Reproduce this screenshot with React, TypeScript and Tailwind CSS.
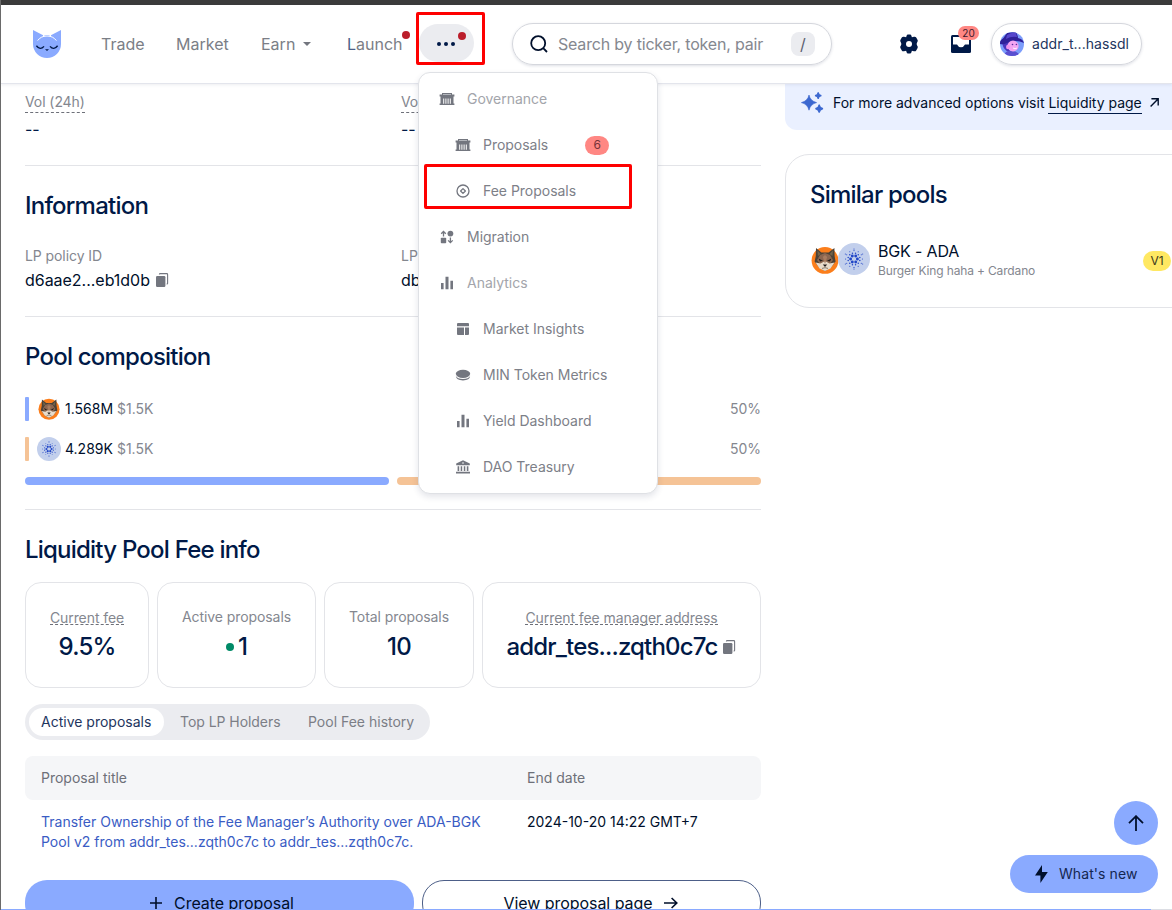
import type { ReactNode } from "react";

function CatLogo() {
  return (
    <svg width="28" height="28" viewBox="0 0 28 28" className="shrink-0">
      <path d="M0 0 L10.6 5.4 Q14 4.4 17.4 5.4 L28 0 V14 A14 14 0 0 1 0 14 Z" fill="#8aaaff" />
      <path d="M4.6 10.6 Q8 6 14 6 T23.4 10.6" fill="none" stroke="#fff" strokeWidth="1" />
      <path d="M10 5.2 L11.8 6.2 M18 5.2 L16.2 6.2" stroke="#fff" strokeWidth="1" />
      <path d="M3.4 15.8 Q7.2 20.6 11 16.4 M17 16.4 Q20.8 20.6 24.6 15.8" fill="none" stroke="#001947" strokeWidth="1.4" />
      <path d="M12 19.2 H16 L14 21 Z" fill="#001947" />
    </svg>
  );
}

function HallIcon() {
  return (
    <svg width="16" height="16" viewBox="0 0 16 16" fill="#73767f">
      <path d="M3 2 H13 V3.4 H15.4 V5.4 H14.5 V12.6 H15.4 V14 H0.6 V12.6 H1.5 V5.4 H0.6 V3.4 H3 Z" />
      <path d="M4.2 7.4 H5.2 V12.8 H4.2 Z M6.4 7.4 H7.4 V12.8 H6.4 Z M8.6 7.4 H9.6 V12.8 H8.6 Z M10.8 7.4 H11.8 V12.8 H10.8 Z" fill="#fff" />
      <path d="M4 3.5 H12" stroke="#c3c5ca" strokeWidth="0.8" />
    </svg>
  );
}

function FeeIcon() {
  return (
    <svg width="16" height="16" viewBox="0 0 16 16" fill="none" stroke="#73767f" strokeWidth="1.3">
      <circle cx="8" cy="8" r="6" />
      <path d="M8 5.6 L10.4 8 L8 10.4 L5.6 8 Z" strokeLinejoin="round" />
    </svg>
  );
}

function MigrationIcon() {
  return (
    <svg width="16" height="16" viewBox="0 0 16 16" fill="#73767f">
      <circle cx="11.4" cy="4.6" r="2.9" />
      <rect x="1.8" y="8.8" width="5.4" height="5.4" rx="0.8" />
      <path d="M4.5 7.6 V2.8 M2.2 4.8 L4.5 2.5 L6.8 4.8 M11.4 8.6 V13.4 M9.1 11.4 L11.4 13.7 L13.7 11.4" fill="none" stroke="#73767f" strokeWidth="1.3" />
    </svg>
  );
}

function BarsIcon() {
  return (
    <svg width="16" height="16" viewBox="0 0 16 16" fill="#73767f">
      <path d="M2 8 H4.6 V14.3 H2 Z M6.5 1.8 H9.5 V14.3 H6.5 Z M11.4 5.8 H14 V14.3 H11.4 Z" />
    </svg>
  );
}

function PanelsIcon() {
  return (
    <svg width="16" height="16" viewBox="0 0 16 16" fill="#73767f">
      <path d="M3 2 H13 Q14 2 14 3 V5.2 H2 V3 Q2 2 3 2 Z M2 6.4 H9 V14 H3 Q2 14 2 13 Z M10 6.4 H14 V13 Q14 14 13 14 H10 Z" />
    </svg>
  );
}

function CoinIcon() {
  return (
    <svg width="16" height="16" viewBox="0 0 16 16" fill="#73767f">
      <ellipse cx="8" cy="6.8" rx="7.2" ry="4.1" />
      <path d="M0.8 8.8 Q1.2 13.4 8 13.4 T15.2 8.8 Q13.6 12 8 12 T0.8 8.8 Z" />
    </svg>
  );
}

function BankIcon() {
  return (
    <svg width="16" height="16" viewBox="0 0 16 16" fill="#73767f">
      <path d="M8 1.2 L14.8 4.6 V6.2 H1.2 V4.6 Z M2.6 7.2 H4.2 V12 H2.6 Z M5.7 7.2 H7.2 V12 H5.7 Z M8.8 7.2 H10.3 V12 H8.8 Z M11.8 7.2 H13.4 V12 H11.8 Z M1 12.8 H15 V14.6 H1 Z" />
      <circle cx="8" cy="4" r="0.8" fill="#fff" />
    </svg>
  );
}

function CopyIcon() {
  return (
    <svg width="13" height="14" viewBox="0 0 13 14" className="shrink-0">
      <rect x="0" y="3" width="9.4" height="11" rx="1.2" fill="#73767f" />
      <path d="M3.4 1.6 V1.4 Q3.4 0.6 4.2 0.6 H10.8 Q11.6 0.6 11.6 1.4 V10.4 Q11.6 11 11 11 H10.6" fill="none" stroke="#73767f" strokeWidth="1.1" />
    </svg>
  );
}

function GearIcon() {
  return (
    <svg width="20" height="20" viewBox="0 0 20 20" className="shrink-0">
      <path
        d="M7.6 1.8 Q7.9 0.4 9 0.4 H11 Q12.1 0.4 12.4 1.8 L12.9 3.2 L15 2.8 Q16.6 2.5 17.2 3.6 L18.6 6 Q19.2 7.1 18.2 8.2 L17.6 10 L18.2 11.8 Q19.2 12.9 18.6 14 L17.2 16.4 Q16.6 17.5 15 17.2 L12.9 16.8 L12.4 18.2 Q12.1 19.6 11 19.6 H9 Q7.9 19.6 7.6 18.2 L7.1 16.8 L5 17.2 Q3.4 17.5 2.8 16.4 L1.4 14 Q0.8 12.9 1.8 11.8 L2.4 10 L1.8 8.2 Q0.8 7.1 1.4 6 L2.8 3.6 Q3.4 2.5 5 2.8 L7.1 3.2 Z"
        fill="#001947"
      />
      <circle cx="10" cy="10" r="3" fill="#fff" />
    </svg>
  );
}

function InboxIcon() {
  return (
    <svg width="20" height="18" viewBox="0 0 20 18">
      <path d="M1.5 0 H18.5 Q20 0 20 1.5 V16.5 Q20 18 18.5 18 H1.5 Q0 18 0 16.5 V1.5 Q0 0 1.5 0 Z" fill="#001947" />
      <path d="M2 2 H18 V9.5 H14 Q12.6 12.3 10 12.3 T6 9.5 H2 Z" fill="#fff" />
    </svg>
  );
}

function Avatar() {
  return (
    <svg width="24" height="24" viewBox="0 0 24 24" className="shrink-0">
      <defs>
        <clipPath id="avatar-clip">
          <circle cx="12" cy="12" r="12" />
        </clipPath>
      </defs>
      <g clipPath="url(#avatar-clip)">
        <rect width="24" height="24" fill="#7c9dfb" />
        <path d="M2 11 Q4 19 9 20 L12 14 L8 8 Z" fill="#4a35bd" />
        <path d="M3 24 Q6 18 12 19 Q18 19 20 24 Z" fill="#5a4fd0" />
        <path d="M0 9 Q4 6 7 1 L16 0 Q18 4 18 6 Q23 7 24 11 Q14 7 7 11 Q3 13 0 12 Z" fill="#2f209a" />
        <path d="M7 3 Q12 0 16 1 L17 5 Q11 4 6 7 Z" fill="#5546cc" />
        <ellipse cx="13" cy="14" rx="5.6" ry="5.4" fill="#f3a4f2" />
        <ellipse cx="8" cy="15" rx="2" ry="2.2" fill="#ee93ee" />
        <circle cx="12.5" cy="12.5" r="0.8" fill="#5a2c9c" />
        <circle cx="16.4" cy="12.5" r="0.8" fill="#5a2c9c" />
        <path d="M13 16 Q15 17.6 17 16" stroke="#fff" strokeWidth="0.9" fill="none" />
      </g>
    </svg>
  );
}

function FoxIcon({ size }: { size: number }) {
  return (
    <svg width={size} height={size} viewBox="0 0 28 28" className="shrink-0">
      <circle cx="14" cy="14.4" r="13.4" fill="#fb7e1c" />
      <path d="M5 2 L10.4 6.4 L17.6 6.4 L23.4 2 L23.6 10 L24.6 15.6 L19.6 22 L14 25 L8.4 22 L3.6 15.6 L4.8 10 Z" fill="#4b4238" />
      <path d="M6.4 4.6 L9.8 8 L7 10 Z M22 4.6 L18.6 8 L21.4 10 Z" fill="#72634a" />
      <path d="M9 9 L14 7 L19 9 L22 14 L19 18 H9 L6 14 Z" fill="#8b6650" />
      <path d="M4.6 16.6 L9.5 17.4 L14 15 L18.5 17.4 L23.6 16.6 L19.5 22.4 L14 25 L8.5 22.4 Z" fill="#e9dccb" />
      <path d="M11.8 11 L14 18 L16.2 11 L14 9 Z" fill="#a87c60" />
      <path d="M7.6 12.6 L12 14.8 L9 15.4 Z M20.4 12.6 L16 14.8 L19 15.4 Z" fill="#231d1b" />
      <path d="M11.8 18.4 H16.2 L14 21 Z" fill="#201a1a" />
      <path d="M11 22.4 Q14 21 17 22.4" stroke="#6b5f54" strokeWidth="0.8" fill="none" />
    </svg>
  );
}

const adaRings = [
  { count: 6, radius: 3.4, dot: 1.45, turn: 0 },
  { count: 12, radius: 6, dot: 0.75, turn: 15 },
  { count: 12, radius: 8.4, dot: 0.55, turn: 0 },
  { count: 6, radius: 10, dot: 0.55, turn: 30 },
];

function AdaIcon({ size }: { size: number }) {
  return (
    <svg width={size} height={size} viewBox="0 0 32 32" className="shrink-0">
      <circle cx="16" cy="16" r="16" fill="#c2cfec" />
      {adaRings.flatMap((ring) =>
        Array.from({ length: ring.count }, (_, i) => {
          const angle = ((i * 360) / ring.count + ring.turn) * (Math.PI / 180);
          return (
            <circle
              key={`${ring.radius}-${i}`}
              cx={16 + ring.radius * Math.cos(angle)}
              cy={16 + ring.radius * Math.sin(angle)}
              r={ring.dot}
              fill="#2146c7"
            />
          );
        }),
      )}
    </svg>
  );
}

type MenuEntry = { label: string; icon: ReactNode; nested?: boolean; group?: boolean; badge?: string; marked?: boolean };

const menu: MenuEntry[] = [
  { label: "Governance", icon: <HallIcon />, group: true },
  { label: "Proposals", icon: <HallIcon />, nested: true, badge: "6" },
  { label: "Fee Proposals", icon: <FeeIcon />, nested: true, marked: true },
  { label: "Migration", icon: <MigrationIcon /> },
  { label: "Analytics", icon: <BarsIcon />, group: true },
  { label: "Market Insights", icon: <PanelsIcon />, nested: true },
  { label: "MIN Token Metrics", icon: <CoinIcon />, nested: true },
  { label: "Yield Dashboard", icon: <BarsIcon />, nested: true },
  { label: "DAO Treasury", icon: <BankIcon />, nested: true },
];

function MoreMenu() {
  return (
    <div className="absolute left-[417px] top-[72px] z-20 h-[422px] w-[240px] rounded-xl border border-[#dfe1e5] bg-white py-[3px] shadow-[0_3px_6px_rgba(30,40,80,0.12)]">
      {menu.map((m) => (
        <div key={m.label} className={`relative flex h-[46px] items-center ${m.nested ? "pl-9" : "pl-5"}`}>
          {m.icon}
          <span className={`ml-3 text-sm tracking-[-0.02px] ${m.group ? "text-[#a3a5ab]" : "text-[#7d8088]"}`}>{m.label}</span>
          {m.badge && (
            <span className="ml-[37px] flex h-[19px] w-6 items-center justify-center rounded-full bg-[#ff8783] text-xs text-[#74343a]">
              {m.badge}
            </span>
          )}
          {m.marked && <div className="absolute left-[5px] top-[-4px] h-[45px] w-[208px] rounded-[2px] border-3 border-[#fe0000]" />}
        </div>
      ))}
    </div>
  );
}

function Header() {
  return (
    <header className="relative z-10 flex h-[79px] shrink-0 items-center border-b border-[#e3e5ec] bg-white pl-8 text-base text-[#7b7e86] shadow-[0_1px_3px_rgba(30,40,80,0.08)]">
      <CatLogo />
      <nav className="flex items-center">
        <a className="ml-10 w-[75px]">Trade</a>
        <a className="w-[85px]">Market</a>
        <a className="flex w-[86px] items-center">
          Earn
          <svg width="8" height="4" viewBox="0 0 8 4" className="ml-2">
            <path d="M0 0 H8 L4 4 Z" fill="#73767f" />
          </svg>
        </a>
        <a className="relative w-[72px]">
          <span className="text-[#4d5f88]">L</span>aunch
          <span className="absolute left-[55px] top-[-1px] size-2 rounded-full bg-[#bb1e2b]" />
        </a>
      </nav>
      <button className="relative mb-0.5 flex h-[38px] w-[55px] items-center justify-center gap-[3px] rounded-full bg-[#ebecf0] pr-0.5 pt-0.5">
        <span className="size-1 rounded-full bg-[#001947]" />
        <span className="size-1 rounded-full bg-[#001947]" />
        <span className="size-1 rounded-full bg-[#001947]" />
        <span className="absolute left-[39px] top-2 size-2 rounded-full bg-[#bb1e2b]" />
        <span className="absolute left-[-3px] top-[-12px] h-[53px] w-[69px] rounded-[2px] border-3 border-[#fe0000]" />
      </button>
      <div className="ml-[38px] flex h-[42px] w-[320px] items-center rounded-full border border-[#d5d7dd] pl-[17px] pr-4 shadow-[0_1px_3px_rgba(30,40,80,0.15)]">
        <svg width="18" height="18" viewBox="0 0 18 18" fill="none" stroke="#000f2b" strokeWidth="1.8" className="shrink-0">
          <circle cx="8.2" cy="8.2" r="7" />
          <path d="M13.2 13.2 L17 17" />
        </svg>
        <span className="ml-[10px] whitespace-nowrap tracking-[-0.19px] text-[#85888f]">Search by ticker, token, pair</span>
        <span className="ml-auto flex size-6 items-center justify-center rounded-lg bg-[#ebecf0] text-base text-[#5c6070]">/</span>
      </div>
      <div className="ml-[67px]">
        <GearIcon />
      </div>
      <div className="relative ml-8">
        <InboxIcon />
        <span className="absolute left-[7px] top-[-9px] flex h-[14px] w-[21px] items-center justify-center rounded-full bg-[#ff8783] text-[10px] text-[#3c1a2c]">
          20
        </span>
      </div>
      <div className="ml-[20px] flex h-[42px] w-[151px] items-center rounded-full border border-[#d5d7dd] pl-2 text-sm tracking-[0.05px] text-[#23355e] shadow-[0_1px_3px_rgba(30,40,80,0.15)]">
        <Avatar />
        <span className="ml-2">addr_t...hassdl</span>
      </div>
    </header>
  );
}

function SectionTitle({ children }: { children: ReactNode }) {
  return <h2 className="text-2xl font-medium leading-8 tracking-[-0.78px] text-[#001947]">{children}</h2>;
}

function StatCard({ className, label, dashed, children }: { className: string; label: string; dashed?: boolean; children: ReactNode }) {
  return (
    <div className={`flex h-[106px] flex-col items-center rounded-2xl border border-[#e3e4e8] pt-6 ${className}`}>
      <div className="flex h-5 items-center whitespace-nowrap text-sm tracking-[-0.08px] text-[#84878f]">
        {dashed ? <span className="mb-px h-4 border-b border-dashed border-[#6d7079] leading-[17px]">{label}</span> : label}
      </div>
      <div className="mt-1 flex h-8 items-center whitespace-nowrap text-2xl font-medium tracking-[-0.83px] text-[#001947]">{children}</div>
    </div>
  );
}

function VolStat() {
  return (
    <div>
      <div className="h-[27px] text-sm leading-5 tracking-[-0.08px] text-[#84878f]">
        <span className="inline-block border-b border-dashed border-[#6d7079]">Vol (24h)</span>
      </div>
      <div className="text-base leading-5 text-[#001947]">--</div>
    </div>
  );
}

function PoolDetails() {
  return (
    <main className="flex w-[736px] flex-col">
      <section className="grid h-[82px] shrink-0 grid-cols-2 gap-4 border-b border-[#e3e4e8] pt-2">
        <VolStat />
        <VolStat />
      </section>

      <section className="h-[151px] shrink-0 border-b border-[#e3e4e8] pt-6">
        <SectionTitle>Information</SectionTitle>
        <div className="mt-6 grid grid-cols-2 gap-4">
          <div>
            <div className="h-5 text-sm leading-5 tracking-[-0.08px] text-[#84878f]">LP policy ID</div>
            <div className="mt-1 flex h-5 items-center gap-[6px] text-base tracking-[-0.03px] text-[#000f2b]">
              d6aae2...eb1d0b
              <CopyIcon />
            </div>
          </div>
          <div>
            <div className="h-5 text-sm leading-5 text-[#84878f]">LP</div>
            <div className="mt-1 h-5 text-base leading-5 text-[#000f2b]">db</div>
          </div>
        </div>
      </section>

      <section className="h-[193px] shrink-0 border-b border-[#e3e4e8] pt-6">
        <SectionTitle>Pool composition</SectionTitle>
        <div className="mt-6 flex h-6 items-center text-sm text-[#84878f]">
          <span className="h-6 w-1 rounded-[1px] bg-[#8aaaff]" />
          <span className="ml-2 flex w-6 justify-center">
            <FoxIcon size={22} />
          </span>
          <span className="ml-1 text-[#000f2b]">1.568M</span>
          <span className="ml-1">$1.5K</span>
          <span className="ml-auto">50%</span>
        </div>
        <div className="mt-4 flex h-6 items-center text-sm text-[#84878f]">
          <span className="h-6 w-1 rounded-[1px] bg-[#f5c396]" />
          <span className="ml-2">
            <AdaIcon size={24} />
          </span>
          <span className="ml-1 text-[#000f2b]">4.289K</span>
          <span className="ml-1">$1.5K</span>
          <span className="ml-auto">50%</span>
        </div>
        <div className="mt-4 flex gap-2">
          <span className="h-2 flex-1 rounded-full bg-[#8aaaff]" />
          <span className="h-2 flex-1 rounded-full bg-[#f5c396]" />
        </div>
      </section>

      <section className="shrink-0 pt-6">
        <SectionTitle>Liquidity Pool Fee info</SectionTitle>
        <div className="mt-4 flex gap-2">
          <StatCard className="w-[124px]" label="Current fee" dashed>
            9.5%
          </StatCard>
          <StatCard className="w-[159px]" label="Active proposals">
            <span className="mr-1 size-2 rounded-full bg-[#008a67]" />1
          </StatCard>
          <StatCard className="w-[150px]" label="Total proposals">
            10
          </StatCard>
          <StatCard className="w-[279px]" label="Current fee manager address" dashed>
            <span className="mr-[6px]">addr_tes...zqth0c7c</span>
            <CopyIcon />
          </StatCard>
        </div>

        <div className="mt-4 flex h-9 w-[405px] items-center rounded-full bg-[#ebecf0] p-1 text-sm text-[#7b7e86]">
          <span className="flex h-7 w-[135px] items-center rounded-full bg-white pl-3 text-[#23355e]">Active proposals</span>
          <span className="ml-4 w-[128px] tracking-[-0.05px]">Top LP Holders</span>
          <span>Pool Fee history</span>
        </div>

        <div className="mt-4 flex h-11 items-center rounded-lg bg-[#f5f6f8] text-sm text-[#6d7079]">
          <span className="w-[486px] pl-4">Proposal title</span>
          <span className="pl-4">End date</span>
        </div>
        <div className="mt-3 flex text-sm leading-5">
          <a className="w-[486px] whitespace-nowrap pl-4 text-[#3a5cc4]">
            Transfer Ownership of the Fee Manager’s Authority over ADA-BGK
            <br />
            Pool v2 from addr_tes...zqth0c7c to addr_tes...zqth0c7c.
          </a>
          <span className="pl-4 text-[#000f2b]">2024-10-20 14:22 GMT+7</span>
        </div>

        <div className="mt-7 flex gap-2 text-base tracking-[-0.05px] text-[#000f2b]">
          <button className="flex h-[46px] w-[389px] items-center justify-center rounded-[22px] bg-[#8aaaff] pl-[5px]">
            <svg width="12" height="12" viewBox="0 0 12 12" className="mr-3" stroke="#000f2b" strokeWidth="1.6">
              <path d="M6 0 V12 M0 6 H12" />
            </svg>
            Create proposal
          </button>
          <button className="flex h-[46px] w-[339px] items-center justify-center rounded-[22px] border border-[#4d5f88] pr-0.5">
            View proposal page
            <svg width="14" height="12" viewBox="0 0 14 12" className="ml-[11px]" fill="none" stroke="#000f2b" strokeWidth="1.6">
              <path d="M0 6 H12.6 M7.6 1 L12.8 6 L7.6 11" />
            </svg>
          </button>
        </div>
      </section>
    </main>
  );
}

function SidePanel() {
  return (
    <aside className="flex w-[411px] shrink-0 flex-col">
      <div className="flex h-[46px] items-start rounded-b-xl bg-[#eaf0ff] pl-4 pt-2 text-sm text-[#000f2b]">
        <svg width="23" height="22" viewBox="0 0 23 22" fill="#3c68d0" className="shrink-0">
          <path d="M8 3 Q9.4 9 15.6 10.6 Q9.4 12.2 8 18.2 Q6.6 12.2 0.4 10.6 Q6.6 9 8 3 Z" stroke="#3c68d0" strokeWidth="0.6" />
          <path d="M17.2 0.4 Q17.6 3.2 20.4 3.6 Q17.6 4 17.2 6.8 Q16.8 4 14 3.6 Q16.8 3.2 17.2 0.4 Z" stroke="#3c68d0" strokeWidth="1.1" />
          <path d="M18.2 12.6 Q18.7 16 22 16.6 Q18.7 17.2 18.2 20.6 Q17.7 17.2 14.4 16.6 Q17.7 16 18.2 12.6 Z" stroke="#3c68d0" strokeWidth="1.1" />
        </svg>
        <span className="ml-[9px] mt-[1px] h-[21px] whitespace-nowrap leading-5 tracking-[-0.01px]">
          For more advanced options visit <span className="inline-block h-[21px] border-b border-[#001947]">Liquidity page</span>
        </span>
        <svg width="9" height="9" viewBox="0 0 9 9" className="ml-2 mt-[6px] shrink-0" fill="none" stroke="#000f2b" strokeWidth="1.4">
          <path d="M0.6 8.4 L8 1 M1.4 0.8 H8.2 V7.6" />
        </svg>
      </div>

      <section className="mt-6 h-[154px] rounded-3xl border border-[#e3e4e8] pl-6 pt-6">
        <SectionTitle>Similar pools</SectionTitle>
        <div className="mt-[29px] flex h-10 items-center">
          <span className="ml-0.5 mt-[-1px] flex w-[26px] justify-center">
            <FoxIcon size={28} />
          </span>
          <span className="mt-[-2px]">
            <AdaIcon size={32} />
          </span>
          <div className="ml-2 mt-0.5 w-[265px]">
            <div className="text-base leading-5 tracking-[-0.15px] text-[#000f2b]">BGK - ADA</div>
            <div className="text-xs leading-5 tracking-[-0.15px] text-[#84878f]">Burger King haha + Cardano</div>
          </div>
          <span className="mt-0.5 flex h-5 w-7 items-center justify-center rounded-full bg-[#ffe862] text-xs text-[#3d3a1c]">V1</span>
        </div>
      </section>
    </aside>
  );
}

export default function App() {
  return (
    <div className="relative flex h-[910px] w-[1172px] flex-col overflow-hidden border-l border-[#6a6a6a] bg-white font-['Inter',sans-serif]">
      <div className="h-[5px] shrink-0 bg-[#3b3b3b]" />
      <Header />
      <div className="flex min-h-0 flex-1 gap-6 pl-6">
        <PoolDetails />
        <SidePanel />
      </div>

      <MoreMenu />

      <div className="absolute bottom-[17px] right-[14px] flex flex-col items-end gap-[10px]">
        <button className="flex size-11 items-center justify-center rounded-full bg-[#8aaaff]">
          <svg width="16" height="16" viewBox="0 0 16 16" fill="none" stroke="#000f2b" strokeWidth="1.8">
            <path d="M8 16 V1.4 M1 8.2 L8 1.2 L15 8.2" />
          </svg>
        </button>
        <button className="flex h-[38px] w-[148px] items-center rounded-full bg-[#8aaaff] pl-[25px] text-sm tracking-[0.08px] text-[#14264f]">
          <svg width="13" height="18" viewBox="0 0 13 18" fill="#000f2b">
            <path d="M7 0 L0 10.4 H5.4 V18 L12.8 7 H7 Z" />
          </svg>
          <span className="ml-[11px]">What's new</span>
        </button>
      </div>
      <div className="absolute bottom-0 left-0 flex h-px w-full bg-[#dcdee4]">
        <span className="w-[1150px] bg-[#8aaaff]" />
      </div>
    </div>
  );
}
